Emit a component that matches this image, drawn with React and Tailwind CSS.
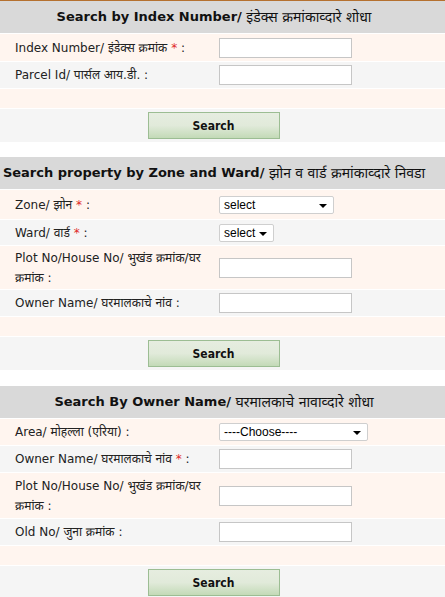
import React from 'react';

const font = { fontFamily: '"DejaVu Sans", "Noto Sans Devanagari", "Noto Sans", sans-serif' };

const Header = ({ children }) => (
  <div className="flex items-center justify-center bg-[#d9d9d9] h-[32px] pr-[17px] whitespace-nowrap text-[13px] font-bold text-[#111]">
    {children}
  </div>
);

const Row = ({ tone, label, required, h, children }) => (
  <div className={`flex items-center ${tone === 'cream' ? 'bg-[#fff5ef]' : 'bg-[#f5f5f5]'}`} style={{ height: h }}>
    <div className="w-[219px] pl-[15px] pr-[14px] text-[12px] leading-[20px] text-[#222]">
      {label}
      {required && <span className="text-[#e02828]"> *</span>} :
    </div>
    <div className="flex items-center">{children}</div>
  </div>
);

const TextBox = () => (
  <input type="text" className="w-[133px] h-[20px] bg-white border border-[#c6c6c6] outline-none" />
);

const Select = ({ width, value }) => (
  <div className="relative h-[18px] bg-white border border-[#cfcfcf] rounded-[2px]" style={{ width }}>
    <span className="absolute left-[4px] top-0 leading-[16px] text-[12px] text-black" style={{ fontFamily: '"Liberation Sans", Arial, sans-serif' }}>
      {value}
    </span>
    <span className="absolute right-[6px] top-[7px] w-0 h-0 border-l-[4px] border-r-[4px] border-t-[4px] border-l-transparent border-r-transparent border-t-black" />
  </div>
);

const ButtonRow = () => (
  <div className="flex justify-center bg-[#f5f5f5] h-[33px] pt-[3px] pr-[18px]">
    <button
      className="w-[132px] h-[27px] border border-[#9cbd93] bg-gradient-to-b from-[#e6ede0] via-[#e1eada] to-[#c3dab7] text-[12px] font-bold text-[#111]"
      style={{ fontFamily: '"DejaVu Sans Condensed", "DejaVu Sans", sans-serif' }}
    >
      Search
    </button>
  </div>
);

const Empty = () => <div className="bg-[#fff5ef] h-[19px]" />;

export default function App() {
  return (
    <div className="w-[445px] h-[597px] overflow-hidden bg-white" style={font}>
      <div className="flex flex-col gap-[1px] border-t border-[#b5712f]">
        <Header>
          Search by Index Number/&nbsp;<span className="font-normal text-[14px]">इंडेक्स क्रमांकाव्दारे शोधा</span>
        </Header>
        <Row tone="cream" h={27} label="Index Number/ इंडेक्स क्रमांक" required>
          <TextBox />
        </Row>
        <Row tone="gray" h={26} label="Parcel Id/ पार्सल आय.डी.">
          <TextBox />
        </Row>
        <Empty />
        <ButtonRow />
      </div>

      <div className="flex flex-col gap-[1px] mt-[15px]">
        <Header>
          Search property by Zone and Ward/&nbsp;<span className="font-normal text-[14px]">झोन व वार्ड क्रमांकाव्दारे निवडा</span>
        </Header>
        <Row tone="cream" h={29} label="Zone/ झोन" required>
          <Select width={115} value="select" />
        </Row>
        <Row tone="gray" h={25} label="Ward/ वार्ड" required>
          <Select width={55} value="select" />
        </Row>
        <Row tone="cream" h={43} label="Plot No/House No/ भुखंड क्रमांक/घर क्रमांक">
          <TextBox />
        </Row>
        <Row tone="gray" h={26} label="Owner Name/ घरमालकाचे नांव">
          <TextBox />
        </Row>
        <Empty />
        <ButtonRow />
      </div>

      <div className="flex flex-col gap-[1px] mt-[16px]">
        <Header>
          Search By Owner Name/&nbsp;<span className="font-normal text-[14px]">घरमालकाचे नावाव्दारे शोधा</span>
        </Header>
        <Row tone="cream" h={26} label="Area/ मोहल्ला (एरिया)">
          <Select width={149} value="----Choose----" />
        </Row>
        <Row tone="gray" h={26} label="Owner Name/ घरमालकाचे नांव" required>
          <TextBox />
        </Row>
        <Row tone="cream" h={45} label="Plot No/House No/ भुखंड क्रमांक/घर क्रमांक">
          <TextBox />
        </Row>
        <Row tone="gray" h={26} label="Old No/ जुना क्रमांक">
          <TextBox />
        </Row>
        <Empty />
        <ButtonRow />
      </div>
    </div>
  );
}
